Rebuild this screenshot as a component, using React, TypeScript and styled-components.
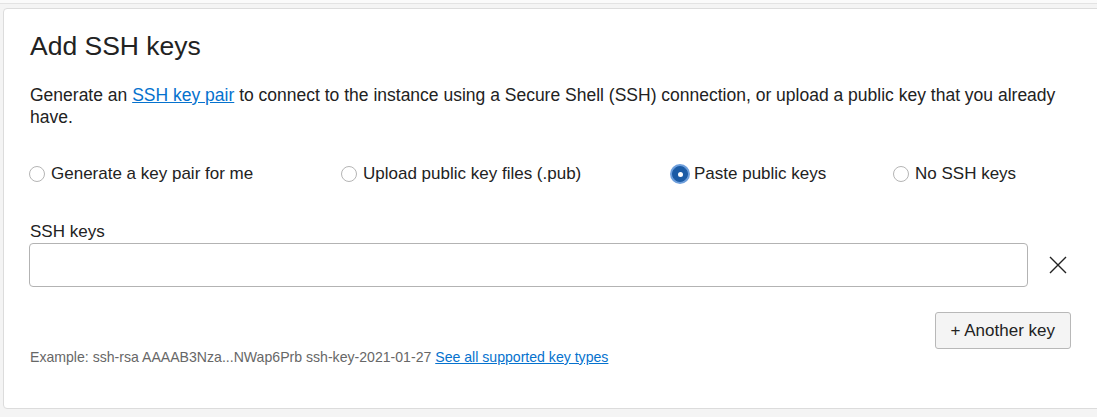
import React, { useState } from 'react';
import styled, { createGlobalStyle } from 'styled-components';

const GlobalStyle = createGlobalStyle`
  html, body {
    margin: 0;
    padding: 0;
    background: #f4f4f4;
    overflow: hidden;
  }
  body {
    font-family: "Liberation Sans", Arial, sans-serif;
    color: #222;
  }
`;

const Page = styled.div`
  width: 1097px;
  height: 417px;
  display: flex;
  flex-direction: column;
`;

const PrevEdge = styled.div`
  height: 3px;
  background: #fafafa;
  border-bottom: 1px solid #e3e3e3;
  margin-bottom: 4px;
`;

const Card = styled.section`
  margin-left: 3px;
  width: 1100px;
  height: 401px;
  box-sizing: border-box;
  background: #fff;
  border: 1px solid #dcdcdc;
  border-radius: 4px;
  padding: 20px 31px 0 25px;
`;

const Title = styled.h2`
  margin: 0 0 0 1px;
  font-size: 26.5px;
  font-weight: 400;
  line-height: 34px;
  color: #222;
`;

const Intro = styled.p`
  margin: 21px 0 0 1px;
  font-size: 17.5px;
  line-height: 22px;
  color: #222;
`;

const Link = styled.a`
  color: #0572ce;
  text-decoration: underline;
  cursor: pointer;
`;

const RadioGroup = styled.div`
  display: grid;
  grid-template-columns: 312px 331px 221px auto;
  margin-top: 35px;
`;

const RadioItem = styled.label`
  display: flex;
  align-items: center;
  gap: 6px;
  font-size: 17px;
  line-height: 22px;
  cursor: pointer;
`;

const RadioDot = styled.span<{ $checked: boolean }>`
  width: 16px;
  height: 16px;
  box-sizing: border-box;
  border-radius: 50%;
  flex: none;
  position: relative;
  background: ${(p) => (p.$checked ? '#1b5ba5' : '#fff')};
  border: 1px solid ${(p) => (p.$checked ? '#1b5ba5' : '#b5b5b5')};
  box-shadow: ${(p) => (p.$checked ? '0 0 0 2px #6d9edb' : 'none')};
  &::after {
    content: '';
    display: ${(p) => (p.$checked ? 'block' : 'none')};
    position: absolute;
    left: 50%;
    top: 50%;
    width: 5px;
    height: 5px;
    margin: -2.5px 0 0 -2.5px;
    border-radius: 50%;
    background: #fff;
  }
`;

const FieldLabel = styled.div`
  margin: 36px 0 0 1px;
  font-size: 17px;
  line-height: 22px;
`;

const KeyRow = styled.div`
  display: flex;
  align-items: center;
  margin-top: 0;
  margin-right: -17px;
`;

const KeyInput = styled.input`
  flex: none;
  width: 999px;
  height: 44px;
  box-sizing: border-box;
  border: 1px solid #b3b3b3;
  border-radius: 4px;
  padding: 0 10px;
  font-size: 17px;
  font-family: inherit;
  outline: none;
`;

const RemoveButton = styled.button`
  flex: none;
  width: 60px;
  height: 44px;
  border: none;
  background: none;
  padding: 0;
  display: flex;
  align-items: center;
  justify-content: center;
  cursor: pointer;
`;

const ActionRow = styled.div`
  display: flex;
  justify-content: flex-end;
  margin-top: 25px;
`;

const AddButton = styled.button`
  height: 37px;
  padding: 0 15px;
  box-sizing: border-box;
  background: #f4f4f4;
  border: 1px solid #b8b8b8;
  border-radius: 3px;
  font-family: inherit;
  font-size: 17px;
  color: #222;
  cursor: pointer;
`;

const Hint = styled.div`
  margin: 0 0 0 1px;
  font-size: 14.1px;
  line-height: 17px;
  color: #676767;
`;

const options = [
  'Generate a key pair for me',
  'Upload public key files (.pub)',
  'Paste public keys',
  'No SSH keys',
];

export default function App() {
  const [choice, setChoice] = useState(2);
  return (
    <Page>
      <GlobalStyle />
      <PrevEdge />
      <Card>
        <Title>Add SSH keys</Title>
        <Intro>
          Generate an <Link>SSH key pair</Link> to connect to the instance using a Secure Shell (SSH)
          connection, or upload a public key that you already have.
        </Intro>
        <RadioGroup>
          {options.map((o, i) => (
            <RadioItem key={o} onClick={() => setChoice(i)}>
              <RadioDot $checked={choice === i} />
              {o}
            </RadioItem>
          ))}
        </RadioGroup>
        <FieldLabel>SSH keys</FieldLabel>
        <KeyRow>
          <KeyInput aria-label="SSH keys" />
          <RemoveButton aria-label="Remove">
            <svg width="18" height="18" viewBox="0 0 18 18">
              <path d="M1 1 L17 17 M17 1 L1 17" stroke="#222" strokeWidth="1.4" fill="none" />
            </svg>
          </RemoveButton>
        </KeyRow>
        <ActionRow>
          <AddButton>+ Another key</AddButton>
        </ActionRow>
        <Hint>
          Example: ssh-rsa AAAAB3Nza...NWap6Prb ssh-key-2021-01-27 <Link>See all supported key types</Link>
        </Hint>
      </Card>
    </Page>
  );
}
